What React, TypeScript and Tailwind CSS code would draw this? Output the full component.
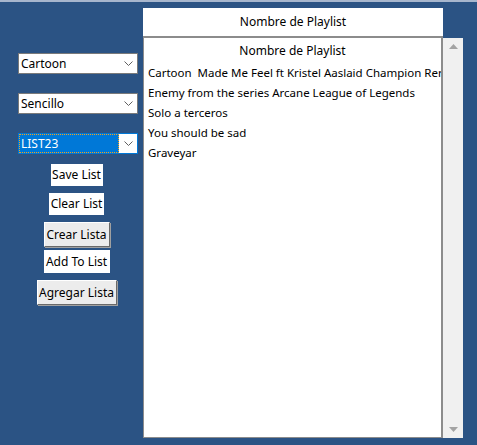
import React from "react";

const font = { fontFamily: '"Noto Sans", "Liberation Sans", sans-serif' };

function Chevron() {
  return (
    <svg width="9" height="6" viewBox="0 0 9 6" className="block">
      <path d="M0.5 0.5 L4.5 4.5 L8.5 0.5" fill="none" stroke="#606060" strokeWidth="1" />
    </svg>
  );
}

function Select({ value, selected }: { value: string; selected?: boolean }) {
  if (selected) {
    return (
      <div className="flex h-[21px] w-[120px] border border-[#0078d7] bg-white">
        <div className="flex h-full w-[100px] items-center border border-dotted border-[#f7a21b] bg-[#0078d7] pl-[1px] text-[12px] leading-none text-white">
          {value}
        </div>
        <div className="flex flex-1 items-center justify-center">
          <Chevron />
        </div>
      </div>
    );
  }
  return (
    <div className="flex h-[21px] w-[120px] items-center border border-[#7a7a7a] bg-white pl-[2px] text-[12px] leading-none text-black">
      <span className="flex-1">{value}</span>
      <div className="flex w-[18px] items-center justify-center">
        <Chevron />
      </div>
    </div>
  );
}

function FlatButton({ label, w, h }: { label: string; w: string; h: string }) {
  return (
    <div className={`flex items-center justify-center bg-white text-[12px] leading-none text-black ${w} ${h}`}>
      {label}
    </div>
  );
}

function RaisedButton({ label, w, h }: { label: string; w: string; h: string }) {
  return (
    <div
      className={`flex items-center justify-center border border-t-white border-l-white border-r-[#696969] border-b-[#696969] bg-[#ececec] text-[12px] leading-none text-black shadow-[1px_1px_0_#a0a0a0] ${w} ${h}`}
    >
      {label}
    </div>
  );
}

export default function App() {
  const rows = [
    "Cartoon  Made Me Feel ft Kristel Aaslaid Champion Rer",
    "Enemy from the series Arcane League of Legends",
    "Solo a terceros",
    "You should be sad",
    "Graveyar",
  ];
  return (
    <div className="h-[445px] w-[477px] overflow-hidden border-t-2 border-[#a7b6cd] bg-[#2b5384]" style={font}>
      <div className="flex">
        <div className="flex w-[143px] flex-col">
          <div className="mt-[51px] flex flex-col gap-[19px] pl-[18px]">
            <Select value="Cartoon" />
            <Select value="Sencillo" />
            <Select value="LIST23" selected />
          </div>
          <div className="mt-[10px] flex w-[153px] flex-col items-center">
            <FlatButton label="Save List" w="w-[52px]" h="h-[22px]" />
            <div className="h-[7px]" />
            <FlatButton label="Clear List" w="w-[55px]" h="h-[22px]" />
            <div className="h-[7px]" />
            <RaisedButton label="Crear Lista" w="w-[66px]" h="h-[25px]" />
            <div className="h-[3px]" />
            <FlatButton label="Add To List" w="w-[66px]" h="h-[23px]" />
            <div className="h-[7px]" />
            <RaisedButton label="Agregar Lista" w="w-[80px]" h="h-[25px]" />
          </div>
        </div>
        <div className="mt-[6px] flex flex-col">
          <div className="flex h-[30px] w-[300px] items-center justify-center border-b-2 border-[#8c8c8c] bg-white text-[12px] text-black">
            Nombre de Playlist
          </div>
          <div className="flex h-[400px]">
            <div className="flex w-[300px] flex-col border-b border-l border-r-2 border-[#8c8c8c] bg-white pt-[3px] text-[11.5px] leading-[20px] text-black">
              <div className="mb-[2px] text-center text-[12px]">Nombre de Playlist</div>
              {rows.map((r) => (
                <div key={r} className="overflow-hidden whitespace-pre pl-[4px]">
                  {r}
                </div>
              ))}
            </div>
            <div className="flex w-[20px] flex-col items-center justify-between bg-[#f0f0f0] py-[6px]">
              <svg width="9" height="5" viewBox="0 0 9 5">
                <path d="M0 5 L4.5 0 L9 5 Z" fill="#a3a3a3" />
              </svg>
              <svg width="9" height="5" viewBox="0 0 9 5">
                <path d="M0 0 L4.5 5 L9 0 Z" fill="#a3a3a3" />
              </svg>
            </div>
          </div>
        </div>
      </div>
    </div>
  );
}
